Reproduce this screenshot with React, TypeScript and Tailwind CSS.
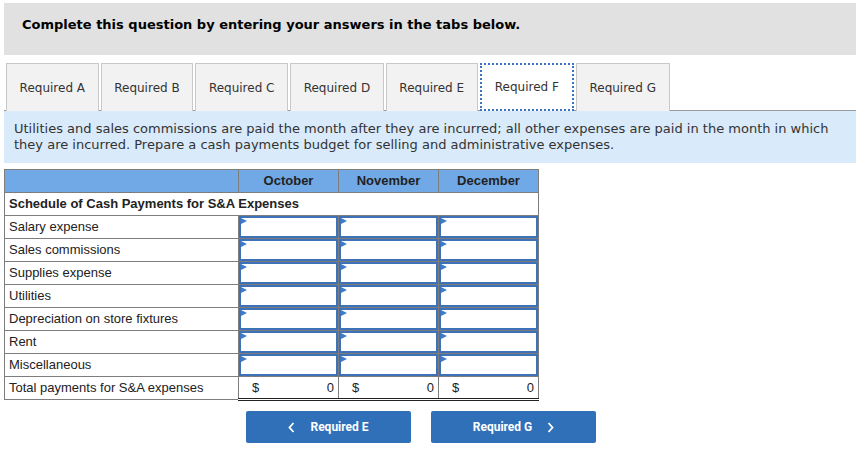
import React from "react";

const tabs = ["Required A", "Required B", "Required C", "Required D", "Required E", "Required F", "Required G"];
const months = ["October", "November", "December"];
const rows = [
  "Salary expense",
  "Sales commissions",
  "Supplies expense",
  "Utilities",
  "Depreciation on store fixtures",
  "Rent",
  "Miscellaneous",
];

function InputCell() {
  return (
    <td className="border border-[#7d7d7d] p-0">
      <div className="relative h-[22px] border-2 border-[#3d72b8] bg-white">
        {/* little blue marker in the corner */}
        <span className="absolute left-0 top-0 h-0 w-0 border-y-[3px] border-l-[6px] border-y-transparent border-l-[#3d7ccc]" />
      </div>
    </td>
  );
}

export default function App() {
  return (
    <div className="min-h-[461px] bg-white pl-[4px] pr-[10px] pt-[3px] font-['DejaVu_Sans',Verdana,sans-serif] text-[#333]">
      <div className="flex h-[52px] items-center bg-[#e1e1e1] px-[18px] pb-[8px] text-[13px] font-bold text-black">
        Complete this question by entering your answers in the tabs below.
      </div>

      {/* tabs */}
      <div className="mt-[8px] flex gap-[2px] border-b border-[#9a9a9a] pl-[2px]">
        {tabs.map((t) => {
          const active = t === "Required F";
          return (
            <div
              key={t}
              className={`-mb-px flex h-[48px] items-center text-[12px] ${
                active
                  ? "border-2 border-dotted border-[#3b73c3] bg-white px-[13px]"
                  : "border border-b-0 border-[#c8c8c8] bg-[#f2f2f2] px-[12.6px]"
              }`}
            >
              {t}
            </div>
          );
        })}
      </div>

      <div className="bg-[#d9eafa] px-[10px] pb-[10px] pt-[10px] text-[13px] leading-[16px] text-[#333]">
        Utilities and sales commissions are paid the month after they are incurred; all other expenses are paid in the month in which they are incurred. Prepare a cash payments budget for selling and administrative expenses.
      </div>

      <table className="mt-[6px] w-[535px] border-collapse font-['Liberation_Sans',Arial,sans-serif] text-[13px] text-[#222]">
        <colgroup>
          <col className="w-[234px]" />
          <col className="w-[100px]" />
          <col className="w-[100px]" />
          <col className="w-[100px]" />
        </colgroup>
        <thead>
          <tr className="h-[23px] bg-[#71a9e6]">
            <th className="border border-[#7d7d7d]" />
            {months.map((m) => (
              <th key={m} className="border border-[#7d7d7d] text-center font-bold text-[#222]">
                {m}
              </th>
            ))}
          </tr>
        </thead>
        <tbody>
          <tr className="h-[23px]">
            <td colSpan={4} className="border border-[#7d7d7d] px-[4px] font-bold">
              Schedule of Cash Payments for S&amp;A Expenses
            </td>
          </tr>
          {rows.map((r) => (
            <tr key={r} className="h-[23px]">
              <td className="border border-[#7d7d7d] px-[4px]">{r}</td>
              <InputCell />
              <InputCell />
              <InputCell />
            </tr>
          ))}
          <tr className="h-[23px]">
            <td className="border border-[#7d7d7d] px-[4px]">Total payments for S&amp;A expenses</td>
            {months.map((m) => (
              <td key={m} className="border border-b-[3px] border-[#7d7d7d] border-b-[#222] border-double px-[4px]">
                <div className="flex justify-between pl-[9px]">
                  <span>$</span>
                  <span>0</span>
                </div>
              </td>
            ))}
          </tr>
        </tbody>
      </table>

      {/* prev / next */}
      <div className="mt-[10px] flex gap-[20px] pl-[242px] font-['Roboto',sans-serif] text-[12px] font-bold text-white">
        <button className="flex h-[32px] w-[165px] items-center justify-center gap-[15px] rounded-[2px] bg-[#3070b9]">
          <svg width="7" height="11" viewBox="0 0 7 11" fill="none" stroke="white" strokeWidth="1.8">
            <path d="M5.5 1 1.5 5.5 5.5 10" />
          </svg>
          <span>Required E</span>
        </button>
        <button className="flex h-[32px] w-[165px] items-center justify-center gap-[15px] rounded-[2px] bg-[#3070b9]">
          <span>Required G</span>
          <svg width="7" height="11" viewBox="0 0 7 11" fill="none" stroke="white" strokeWidth="1.8">
            <path d="M1.5 1 5.5 5.5 1.5 10" />
          </svg>
        </button>
      </div>
    </div>
  );
}
